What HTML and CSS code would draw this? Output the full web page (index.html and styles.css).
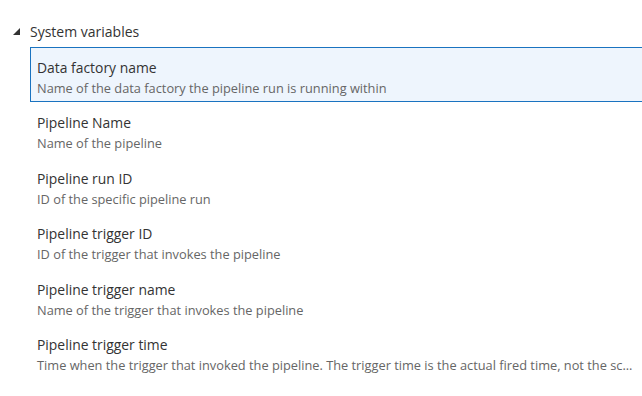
FILE: index.html
```html
<!DOCTYPE html>
<html lang="en">

<head>
  <meta charset="UTF-8" />
  <title>System variables</title>
  <link rel="stylesheet" href="styles.css">
</head>

<body>
  <div class="section">
    <div class="section-header">
      <span class="caret"></span>
      <span class="section-title">System variables</span>
    </div>

    <ul class="var-list">
      <li class="var-item selected">
        <div class="var-name">Data factory name</div>
        <div class="var-desc">Name of the data factory the pipeline run is running within</div>
      </li>
      <li class="var-item">
        <div class="var-name">Pipeline Name</div>
        <div class="var-desc">Name of the pipeline</div>
      </li>
      <li class="var-item">
        <div class="var-name">Pipeline run ID</div>
        <div class="var-desc">ID of the specific pipeline run</div>
      </li>
      <li class="var-item">
        <div class="var-name">Pipeline trigger ID</div>
        <div class="var-desc">ID of the trigger that invokes the pipeline</div>
      </li>
      <li class="var-item">
        <div class="var-name">Pipeline trigger name</div>
        <div class="var-desc">Name of the trigger that invokes the pipeline</div>
      </li>
      <li class="var-item">
        <div class="var-name">Pipeline trigger time</div>
        <div class="var-desc">Time when the trigger that invoked the pipeline. The trigger time is the actual fired time, not the sc...</div>
      </li>
    </ul>
  </div>
</body>

</html>
```

FILE: styles.css
```css
body {
  margin: 0;
  background: #fff;
  font-family: 'Segoe UI', 'Open Sans', sans-serif;
  color: #333;
  overflow: hidden;
}

.section {
  padding-top: 21px;
}

.section-header {
  display: flex;
  align-items: center;
  height: 20px;
  padding-left: 13px;
}

.caret {
  width: 0;
  height: 0;
  border-left: 7px solid transparent;
  border-bottom: 7px solid #333;
  margin-right: 10px;
  margin-top: 1px;
}

.section-title {
  font-size: 14px;
  color: #333;
}

.var-list {
  list-style: none;
  margin: 6px 0 0 30px;
  padding: 0;
}

.var-item {
  border: 1px solid transparent;
  border-right: none;
  padding: 10px 0 3.4px 6px;
  white-space: nowrap;
}

.var-item.selected {
  background: #eef5fd;
  border-color: #1a73c0;
}

.var-name {
  font-size: 13.9px;
  line-height: 20px;
  color: #333;
}

.var-desc {
  font-size: 12.8px;
  line-height: 20px;
  color: #666;
}
```
